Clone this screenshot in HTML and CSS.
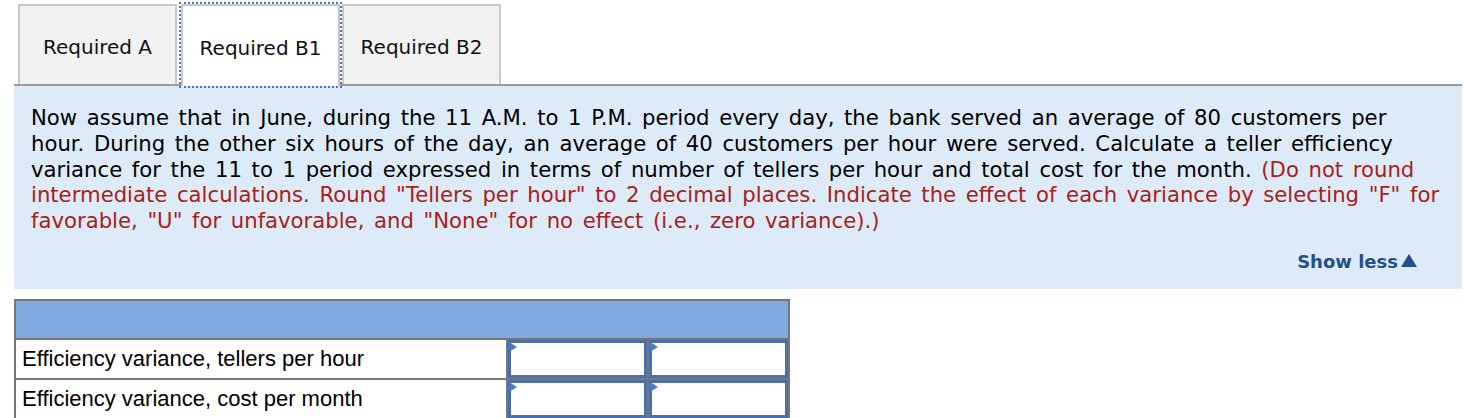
FILE: index.html
```html
<!DOCTYPE html>
<html lang="en">
<head>
<meta charset="utf-8">
<title>Required B1</title>
<link rel="stylesheet" href="styles.css">
</head>
<body>
<div class="page">
  <div class="tabs">
    <div class="tab">Required A</div>
    <div class="tab active">Required B1</div>
    <div class="tab">Required B2</div>
  </div>
  <div class="panel">
    <p class="question">Now assume that in June, during the 11 A.M. to 1 P.M. period every day, the bank served an average of 80 customers per hour. During the other six hours of the day, an average of 40 customers per hour were served. Calculate a teller efficiency variance for the 11 to 1 period expressed in terms of number of tellers per hour and total cost for the month. <span class="hint">(Do not round intermediate calculations. Round "Tellers per hour" to 2 decimal places. Indicate the effect of each variance by selecting "F" for favorable, "U" for unfavorable, and "None" for no effect (i.e., zero variance).)</span></p>
    <div class="toggle">Show less<span class="arrow"></span></div>
  </div>
  <table class="answer">
    <tr class="head"><th colspan="3"></th></tr>
    <tr>
      <td class="label">Efficiency variance, tellers per hour</td>
      <td class="entry"><div class="box"></div></td>
      <td class="entry"><div class="box"></div></td>
    </tr>
    <tr>
      <td class="label">Efficiency variance, cost per month</td>
      <td class="entry"><div class="box"></div></td>
      <td class="entry"><div class="box"></div></td>
    </tr>
  </table>
</div>
</body>
</html>
```
FILE: styles.css
```css
html, body {
  margin: 0;
  padding: 0;
  background: #ffffff;
}

.page {
  padding: 4px 12px 0 14px;
  font-family: "DejaVu Sans", Verdana, sans-serif;
  color: #000;
}

/* tab strip */
.tabs {
  display: flex;
  gap: 2px;
  padding-left: 4px;
  border-bottom: 2px solid #9a9a9a;
  height: 80px;
}

.tab {
  box-sizing: border-box;
  width: 159px;
  height: 80px;
  display: flex;
  align-items: center;
  justify-content: center;
  padding-top: 4px;
  background: #f2f2f2;
  border: 2px solid #c8c8c8;
  border-bottom: none;
  font-size: 20px;
  color: #111;
}

.tab.active {
  background: #ffffff;
  height: 82px;
  margin-left: 2px;
  margin-bottom: -2px;
  outline: 2px dotted #4a78c0;
  position: relative;
}

/* question panel */
.panel {
  background: #ddebf8;
  padding: 19px 16px 17px 17px;
}

.question {
  margin: 0;
  font-size: 21.2px;
  line-height: 25.75px;
  word-spacing: 2.9px;
}

.hint {
  color: #a82018;
}

.toggle {
  margin-top: 17px;
  display: flex;
  justify-content: flex-end;
  align-items: center;
  padding-right: 29px;
  font-size: 18px;
  font-weight: bold;
  color: #24508a;
}

.arrow {
  width: 0;
  height: 0;
  margin-left: 3px;
  margin-top: -2px;
  border-left: 8px solid transparent;
  border-right: 8px solid transparent;
  border-bottom: 13px solid #24508a;
}

/* answer grid */
.answer {
  margin-top: 10px;
  border-collapse: collapse;
  border: 2px solid #777777;
  width: 776px;
  font-family: "Liberation Sans", Arial, sans-serif;
}

.answer th,
.answer td {
  border: 2px solid #777777;
  padding: 0;
}

.head th {
  background: #80aadf;
  height: 37px;
}

.label {
  width: 484px;
  height: 38px;
  padding-left: 6px !important;
  font-size: 22px;
  text-align: left;
}

.entry {
  width: 139px;
}

.box {
  position: relative;
  box-sizing: border-box;
  height: 38px;
  border: 3px solid #4870ae;
  background: #fff;
}

.box::before {
  content: "";
  position: absolute;
  left: -2px;
  top: -1px;
  border-top: 5px solid transparent;
  border-bottom: 5px solid transparent;
  border-left: 8px solid #4a7cc4;
}
```
